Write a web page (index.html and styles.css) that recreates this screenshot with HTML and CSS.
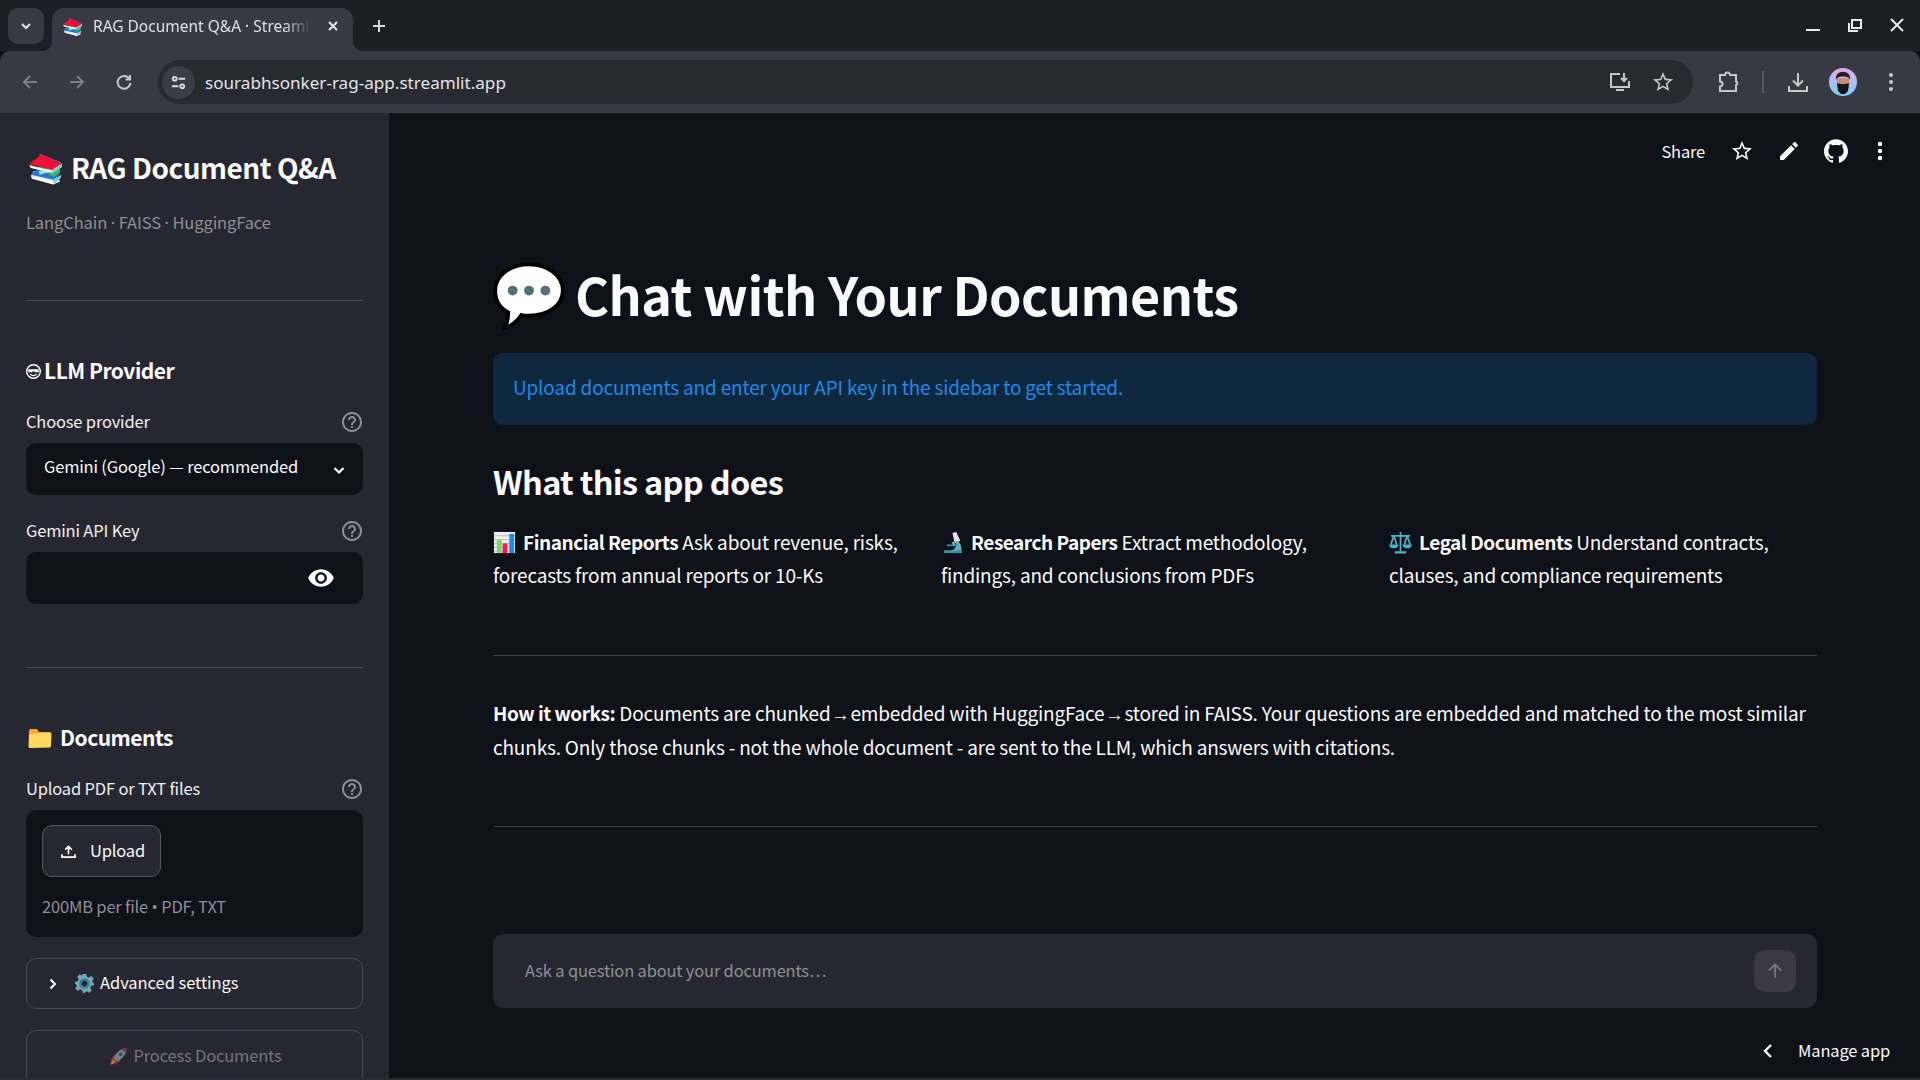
FILE: index.html
```html
<!DOCTYPE html>
<html lang="en">

<head>
	<meta charset="UTF-8">
	<meta name="viewport" content="width=device-width, initial-scale=1.0">
	<title>RAG Document Q&amp;A</title>
	<link rel="stylesheet" href="styles.css">
</head>

<body>
	<svg class="defs" xmlns="http://www.w3.org/2000/svg">
		<symbol id="help" viewBox="0 0 24 24">
			<path fill="currentColor" d="M11 18h2v-2h-2v2zm1-16C6.48 2 2 6.48 2 12s4.48 10 10 10 10-4.48 10-10S17.52 2 12 2zm0 18c-4.41 0-8-3.59-8-8s3.59-8 8-8 8 3.59 8 8-3.59 8-8 8zm0-14c-2.21 0-4 1.79-4 4h2c0-1.1.9-2 2-2s2 .9 2 2c0 2-3 1.75-3 5h2c0-2.25 3-2.5 3-5 0-2.21-1.79-4-4-4z" />
		</symbol>
		<symbol id="books" viewBox="0 0 36 34">
			<path fill="#5f6a6e" d="M12 2l22 9-3 7-20-6z" />
			<path fill="#e8f1f0" d="M3 25l3-5 25 7 2 4-7 3z" />
			<path fill="#1976d2" d="M3 24l8-7 22 7-7 5z" />
			<path fill="#7dc9d6" d="M26 29l8-5v3l-7 6-1-1z" />
			<path fill="#fff" d="M3 25l23 7v2L4 28z" />
			<path fill="#4caf50" d="M9 17l10-5 14 5v5l-7 4z" />
			<path fill="#a5dccb" d="M11 20l20-4-1 3-18 5z" />
			<path fill="#ef0f3a" d="M1 13L14 3l20 9-9 7z" />
			<path fill="#fff" d="M1 14l24 6v2L3 17z" />
			<path fill="#7dc9d6" d="M25 19l10-7v4l-10 7z" />
		</symbol>
	</svg>

	<div class="tabstrip">
		<button class="tab-search">
			<svg viewBox="0 0 16 16"><path d="M4 6l4 4 4-4" /></svg>
		</button>
		<div class="tab">
			<svg class="favicon"><use href="#books" /></svg>
			<span class="tab-title">RAG Document Q&amp;A · Streamlit</span>
			<svg class="tab-close" viewBox="0 0 12 12"><path d="M2 2l8 8M10 2l-8 8" /></svg>
		</div>
		<svg class="new-tab" viewBox="0 0 14 14"><path d="M7 1v12M1 7h12" /></svg>
		<div class="window-controls">
			<svg viewBox="0 0 16 16"><path d="M1 13h14" /></svg>
			<svg viewBox="0 0 16 16"><path d="M5 3h9v8H5zM2 6v8h9" /></svg>
			<svg viewBox="0 0 16 16"><path d="M2 2l12 12M14 2L2 14" /></svg>
		</div>
	</div>

	<div class="toolbar">
		<div class="nav-buttons">
			<svg class="dim" viewBox="0 0 18 18"><path d="M16 9H3M9 3L3 9l6 6" /></svg>
			<svg class="dim" viewBox="0 0 18 18"><path d="M2 9h13M9 3l6 6-6 6" /></svg>
			<svg viewBox="0 0 18 18"><path d="M14.5 6A6.4 6.4 0 1 0 15.4 10M15 2v4.400h-4.400" /></svg>
		</div>
		<div class="omnibox">
			<span class="site-info">
				<svg viewBox="0 0 18 18">
					<circle cx="5" cy="5" r="2" />
					<path d="M9 5h7M2 13h7" />
					<circle cx="13" cy="13" r="2" />
				</svg>
			</span>
			<span class="url">sourabhsonker-rag-app.streamlit.app</span>
			<svg class="omni-icon" viewBox="0 0 22 22">
				<path d="M11 3H2v13h18v-6M15 2v8M12 7l3 3 3-3M7 19h8" />
			</svg>
			<svg class="omni-icon star-icon" viewBox="0 0 24 24">
				<path d="M22 9.240l-7.190-.62L12 2 9.190 8.630 2 9.240l5.460 4.730L5.820 21 12 17.270 18.180 21l-1.630-7.030L22 9.240zM12 15.400l-3.760 2.270 1-4.280-3.320-2.880 4.380-.38L12 6.100l1.710 4.040 4.380.38-3.320 2.880 1 4.280L12 15.400z" />
			</svg>
		</div>
		<div class="toolbar-right">
			<svg class="tool-ext" viewBox="0 0 22 22">
				<path d="M3 4h5a2.500 2.500 0 0 1 5 0h6v6.500a1.800 1.800 0 0 1 0 3.500V20H3v-4.500a2.500 2.500 0 0 0 0-5z" />
			</svg>
			<span class="tool-sep"></span>
			<svg class="tool-dl" viewBox="0 0 22 22"><path d="M11 2v12M6 9.500l5 5 5-5M2 15v5h18v-5" /></svg>
			<svg class="avatar" viewBox="0 0 28 28">
				<defs>
					<linearGradient id="avatarBg" x1="0" y1="0" x2="0" y2="1">
						<stop offset="0" stop-color="#e6a8ec" />
						<stop offset="1" stop-color="#74d2f7" />
					</linearGradient>
				</defs>
				<circle cx="14" cy="14" r="14" />
				<path d="M8 10h12v10H8z" />
				<path d="M7 12C5 1 23 1 21 12l-1-2c-3-2-9-2-12 0z" />
				<path d="M8 15c3 1.500 9 1.500 12 0l-1 8-3 3h-4l-3-3z" />
			</svg>
			<svg class="tool-dots" viewBox="0 0 6 22">
				<circle cx="3" cy="4" r="2" />
				<circle cx="3" cy="11" r="2" />
				<circle cx="3" cy="18" r="2" />
			</svg>
		</div>
	</div>

	<div class="app">
		<aside class="sidebar">
			<div class="brand">
				<svg class="brand-emoji"><use href="#books" /></svg>
				<span>RAG Document Q&amp;A</span>
			</div>
			<p class="caption">LangChain <span class="sym">·</span> FAISS <span class="sym">·</span> HuggingFace</p>
			<hr class="side-rule">

			<h3 class="side-heading tight">
				<svg class="llm-emoji" viewBox="0 0 18 18">
					<circle cx="9" cy="9" r="7.200" fill="none" stroke="#fff" stroke-width="1.500" />
					<path fill="#fff" d="M3.500 6.500h11v3.200h-4l-1-1h-1l-1 1h-4z" />
					<path fill="none" stroke="#fff" stroke-width="1.300" d="M5.500 12c2 1.600 5 1.600 7 0" />
				</svg>
				<span>LLM Provider</span>
			</h3>
			<div class="field-label">
				<span>Choose provider</span>
				<svg class="help"><use href="#help" /></svg>
			</div>
			<div class="select-box">
				<span>Gemini (Google) — recommended</span>
				<svg viewBox="0 0 16 16"><path d="M3.500 6l4.500 4.500L12.500 6" /></svg>
			</div>
			<div class="field-label next">
				<span>Gemini API Key</span>
				<svg class="help"><use href="#help" /></svg>
			</div>
			<div class="key-box">
				<svg viewBox="0 0 24 24">
					<path fill="#fff" d="M12 4.500C7 4.500 2.730 7.610 1 12c1.730 4.390 6 7.500 11 7.500s9.270-3.110 11-7.500c-1.730-4.390-6-7.500-11-7.500zM12 17c-2.760 0-5-2.240-5-5s2.240-5 5-5 5 2.240 5 5-2.240 5-5 5zm0-8c-1.660 0-3 1.340-3 3s1.340 3 3 3 3-1.340 3-3-1.340-3-3-3z" />
				</svg>
			</div>
			<hr class="side-rule second">

			<h3 class="side-heading">
				<svg class="folder-emoji" viewBox="0 0 24 20">
					<path fill="#f5a63c" d="M1 3a2 2 0 0 1 2-2h6l2 3h10a2 2 0 0 1 2 2v2H1z" />
					<path fill="#fdd85d" d="M1 6l21-1.500a1.500 1.500 0 0 1 1.500 1.500L23 18a1.500 1.500 0 0 1-1.500 1.500L2 20a1.500 1.500 0 0 1-1.500-1.500z" />
				</svg>
				<span>Documents</span>
			</h3>
			<div class="field-label">
				<span>Upload PDF or TXT files</span>
				<svg class="help"><use href="#help" /></svg>
			</div>
			<div class="uploader">
				<button class="upload-btn">
					<svg viewBox="0 0 16 16"><path d="M8 11V2.500M4.500 6L8 2.500 11.500 6M1 11v3h14v-3" /></svg>
					<span>Upload</span>
				</button>
				<p class="upload-hint">200MB per file <span class="sym">•</span> PDF, TXT</p>
			</div>
			<div class="expander">
				<svg class="exp-chevron" viewBox="0 0 10 14"><path d="M2.500 2.500L7 7l-4.500 4.500" /></svg>
				<svg class="gear-emoji" viewBox="0 0 24 24">
					<path fill="#6fa9bb" d="M10 1h4l.7 3.200 2.300 1L19.800 3.400l2.800 2.800-1.800 2.800 1 2.300L23 12l-.2 2-3.200.7-1 2.300 1.800 2.800-2.800 2.800-2.800-1.800-2.300 1L12 23l-2-.2-.7-3.200-2.300-1-2.800 1.800-2.800-2.800 1.800-2.800-1-2.300L1 12l.2-2 3.200-.7 1-2.300-1.800-2.800 2.800-2.800L9.200 3.200z" />
					<circle cx="12" cy="12" r="6" fill="#3f7f95" />
					<circle cx="12" cy="12" r="3.200" fill="#262730" />
				</svg>
				<span>Advanced settings</span>
			</div>
			<button class="process-btn">
				<svg class="rocket-emoji" viewBox="0 0 24 24">
					<path fill="#a02433" d="M5 16l-3 1 4-6 4-1zM8 19l-1 3 6-4 1-4z" />
					<path fill="#e0832f" d="M6 15c-2 1-3 5-3 6s5-1 6-3z" />
					<path fill="#7d8b93" d="M6 14C9 7 15 3 22 2c-1 7-5 13-12 16z" />
					<path fill="#a02433" d="M16 3.500C18 3 20 2.500 22 2c-.5 2-1 4-1.500 6z" />
					<circle cx="14.500" cy="9.500" r="2" fill="#3d4d55" />
				</svg>
				<span>Process Documents</span>
			</button>
		</aside>

		<main class="main">
			<div class="app-toolbar">
				<span class="share">Share</span>
				<svg class="bar-icon" viewBox="0 0 24 24">
					<path fill="#fff" d="M22 9.240l-7.190-.62L12 2 9.190 8.630 2 9.240l5.460 4.730L5.820 21 12 17.270 18.180 21l-1.630-7.030L22 9.240zM12 15.400l-3.760 2.270 1-4.280-3.320-2.880 4.380-.38L12 6.100l1.710 4.040 4.380.38-3.320 2.880 1 4.280L12 15.400z" />
				</svg>
				<svg class="bar-icon" viewBox="0 0 24 24">
					<path fill="#fff" d="M3 17.250V21h3.750L17.810 9.940l-3.750-3.750L3 17.250zM20.710 7.040a1 1 0 0 0 0-1.410l-2.340-2.340a1 1 0 0 0-1.410 0l-1.830 1.830 3.750 3.750 1.830-1.830z" />
				</svg>
				<svg class="bar-icon github" viewBox="0 0 24 24">
					<path fill="#fff" d="M12 .297c-6.630 0-12 5.373-12 12 0 5.303 3.438 9.800 8.205 11.385.6.113.82-.258.82-.577 0-.285-.01-1.040-.015-2.040-3.338.724-4.042-1.610-4.042-1.610C4.422 18.070 3.633 17.700 3.633 17.700c-1.087-.744.084-.729.084-.729 1.205.084 1.838 1.236 1.838 1.236 1.070 1.835 2.809 1.305 3.495.998.108-.776.417-1.305.76-1.605-2.665-.3-5.466-1.332-5.466-5.930 0-1.310.465-2.380 1.235-3.220-.135-.303-.54-1.523.105-3.176 0 0 1.005-.322 3.300 1.230.96-.267 1.980-.399 3-.405 1.020.006 2.040.138 3 .405 2.280-1.552 3.285-1.230 3.285-1.230.645 1.653.24 2.873.12 3.176.765.84 1.230 1.910 1.230 3.220 0 4.610-2.805 5.625-5.475 5.920.42.36.81 1.096.81 2.220 0 1.606-.015 2.896-.015 3.286 0 .315.21.69.825.57C20.565 22.092 24 17.592 24 12.297c0-6.627-5.373-12-12-12" />
				</svg>
				<svg class="bar-dots" viewBox="0 0 6 22" fill="#fff">
					<circle cx="3" cy="4" r="2.200" />
					<circle cx="3" cy="11" r="2.200" />
					<circle cx="3" cy="18" r="2.200" />
				</svg>
			</div>

			<div class="content">
				<h1 class="page-title">
					<svg class="bubble-emoji" viewBox="0 0 66 64">
						<path fill="#fff" stroke="#000" stroke-width="3.500" d="M33 3c17 0 31 10 31 24S50 50 33 50c-3 0-5 0-7-.6C23 54 17 60 11 61c2-4 3-9 3-14C6 43 2 36 2 27 2 13 16 3 33 3z" />
						<circle cx="18" cy="27" r="4.500" fill="#546e7a" />
						<circle cx="33" cy="27" r="4.500" fill="#546e7a" />
						<circle cx="48" cy="27" r="4.500" fill="#546e7a" />
					</svg>
					<span>Chat with Your Documents</span>
				</h1>
				<div class="info-box">Upload documents and enter your API key in the sidebar to get started.</div>
				<h2 class="section-title">What this app does</h2>
				<div class="use-cases">
					<p>
						<svg class="inline-emoji" viewBox="0 0 24 24">
							<rect x="1" y="1" width="22" height="22" fill="#eceff1" />
							<path stroke="#b0bec5" stroke-width="1" d="M1 5h22M1 9h22M1 13h22M1 17h22M1 21h22" />
							<rect x="4" y="9" width="5" height="14" fill="#7cd66a" />
							<rect x="10" y="13" width="5" height="10" fill="#ff1744" />
							<rect x="17" y="3" width="5" height="20" fill="#1e88e5" />
						</svg>
						<b>Financial Reports</b> Ask about revenue, risks, forecasts from annual reports or 10-Ks
					</p>
					<p>
						<svg class="inline-emoji" viewBox="0 0 24 24">
							<path fill="#e0e4e6" d="M12 2l4-1 4 9-4 3-2-1z" />
							<path fill="#5fb0c6" d="M15 10c5 1 7 6 6 11H9c3-1 7-3 7-7 0-1-.4-2-1-3z" />
							<path fill="#3f8ea8" d="M3 20h19v3H3zM6 14h10v2H6z" />
							<path fill="#8db4bf" d="M11 12l2-1 2 3-2 1z" />
						</svg>
						<b>Research Papers</b> Extract methodology, findings, and conclusions from PDFs
					</p>
					<p>
						<svg class="inline-emoji" viewBox="0 0 24 24">
							<path fill="none" stroke="#4fb3c8" stroke-width="1.800" d="M12 1v20M2 5h20M5 5l-3 9M5 5l3 9M19 5l-3 9M19 5l3 9" />
							<path fill="#4fb3c8" d="M0 14h10c-.5 3-2.500 4-5 4s-4.500-1-5-4zM14 14h10c-.5 3-2.500 4-5 4s-4.500-1-5-4zM6 21h12v2.500H6z" />
						</svg>
						<b>Legal Documents</b> Understand contracts, clauses, and compliance requirements
					</p>
				</div>
				<hr class="main-rule first">
				<p class="how-it-works"><b>How it works:</b> Documents are chunked <span class="arrow">→</span> embedded with HuggingFace <span class="arrow">→</span> stored in FAISS. Your questions are embedded and matched to the most similar chunks. Only those chunks - not the whole document - are sent to the LLM, which answers with citations.</p>
				<hr class="main-rule">
				<div class="chat-input">
					<span>Ask a question about your documents…</span>
					<button class="send-btn">
						<svg viewBox="0 0 20 20"><path d="M10 17V3.500M4 9.500l6-6 6 6" /></svg>
					</button>
				</div>
			</div>

			<div class="manage-app">
				<svg viewBox="0 0 12 18"><path d="M9 3L3 9l6 6" /></svg>
				<span>Manage app</span>
			</div>
		</main>
	</div>
	<div class="bottom-edge"></div>
</body>

</html>
```

FILE: styles.css
```css
* {
	margin: 0;
	padding: 0;
	box-sizing: border-box;
}

:root {
	--frame: #1c1f26;
	--chrome: #373a42;
	--omni: #272a31;
	--chrome-icon: #c6c7cb;
	--app-bg: #0e1117;
	--side-bg: #262730;
	--rule: #4a4a54;
	--muted: #8e8f96;
	--text: #fafafa;
}

html,
body {
	width: 1920px;
	height: 1080px;
	overflow: hidden;
}

body {
	background: var(--app-bg);
	color: var(--text);
	font-family: "Noto Sans CJK SC", "Noto Sans", sans-serif;
	display: flex;
	flex-direction: column;
}

button {
	font-family: inherit;
	border: none;
	background: none;
	color: inherit;
}

svg {
	flex-shrink: 0;
	display: block;
}

.defs {
	width: 0;
	height: 0;
	position: absolute;
}

.sym {
	font-family: "Noto Sans", sans-serif;
	line-height: 1;
}

.arrow {
	font-family: "Liberation Sans", sans-serif;
	line-height: 1;
	margin: 0 -3.500px;
}

/* browser frame */
.tabstrip {
	height: 51px;
	background: var(--frame);
	display: flex;
	align-items: flex-start;
	padding: 8px 0 0 8px;
}

.tabstrip svg path,
.toolbar svg path,
.toolbar circle {
	fill: none;
	stroke: currentColor;
	stroke-width: 2;
}

.toolbar .avatar path,
.toolbar .avatar circle,
.toolbar .tool-dots circle {
	stroke: none;
}

.toolbar .avatar path:nth-of-type(1) {
	fill: #c98f76;
}

.toolbar .avatar path:nth-of-type(2) {
	fill: #2a1c1c;
}

.toolbar .avatar path:nth-of-type(3) {
	fill: #14161b;
}

.toolbar .avatar circle {
	fill: url(#avatarBg);
}

.toolbar .tool-dots circle {
	fill: currentColor;
}

.toolbar .star-icon path {
	stroke: none;
	fill: currentColor;
}

.tab-search {
	width: 36px;
	height: 36px;
	background: var(--chrome);
	border-radius: 10px;
	display: flex;
	align-items: center;
	justify-content: center;
	color: #e3e4e8;
}

.tab-search svg {
	width: 16px;
	height: 16px;
}

.tab {
	width: 301px;
	height: 43px;
	margin-left: 8px;
	background: var(--chrome);
	border-radius: 12px 12px 0 0;
	display: flex;
	align-items: center;
	padding: 0 14px 7px 10px;
	position: relative;
	color: #dfe0e4;
}

.tab::before,
.tab::after {
	content: "";
	position: absolute;
	bottom: 0;
	width: 10px;
	height: 10px;
}

.tab::before {
	left: -10px;
	background: radial-gradient(circle at 0 0, transparent 10px, var(--chrome) 10.5px);
}

.tab::after {
	right: -10px;
	background: radial-gradient(circle at 100% 0, transparent 10px, var(--chrome) 10.5px);
}

.favicon {
	width: 21px;
	height: 19px;
}

.tab-title {
	margin-left: 10px;
	width: 217px;
	white-space: nowrap;
	overflow: hidden;
	font-family: "Noto Sans", sans-serif;
	font-size: 15.500px;
	-webkit-mask-image: linear-gradient(to right, #000 88%, transparent 100%);
	mask-image: linear-gradient(to right, #000 88%, transparent 100%);
}

.tab-close {
	width: 12px;
	height: 12px;
	margin-left: auto;
	color: #e6e7ea;
}

.new-tab {
	width: 14px;
	height: 14px;
	margin: 11px 0 0 19px;
	color: #d6d7db;
}

.window-controls {
	margin-left: auto;
	display: flex;
	gap: 26px;
	padding: 9px 15px 0 0;
	color: #e8e9ec;
}

.window-controls svg {
	width: 16px;
	height: 16px;
}

.toolbar {
	height: 62px;
	background: var(--chrome);
	display: flex;
	align-items: center;
	border-radius: 10px 10px 0 0;
	padding-left: 21px;
	color: var(--chrome-icon);
}

.nav-buttons {
	display: flex;
	gap: 29px;
	width: 137px;
}

.nav-buttons svg {
	width: 18px;
	height: 18px;
}

.nav-buttons .dim {
	color: #7d7f86;
}

.omnibox {
	width: 1535px;
	height: 44px;
	background: var(--omni);
	border-radius: 22px;
	display: flex;
	align-items: center;
	padding: 0 18px 0 4px;
}

.site-info {
	width: 33px;
	height: 33px;
	border-radius: 50%;
	background: #3a3d45;
	display: flex;
	align-items: center;
	justify-content: center;
	color: #dcdde0;
}

.site-info svg {
	width: 17px;
	height: 17px;
}

.url {
	margin-left: 10px;
	font-family: "Noto Sans", sans-serif;
	font-size: 17.100px;
	color: #e3e4e8;
}

.omni-icon {
	width: 22px;
	height: 22px;
	margin-left: 20px;
}

.omni-icon:first-of-type {
	margin-left: auto;
}

.omni-icon.star-icon {
	width: 24px;
	height: 24px;
}

.toolbar-right {
	display: flex;
	align-items: center;
	flex: 1;
	padding-left: 24px;
}

.tool-ext {
	width: 22px;
	height: 22px;
}

.tool-sep {
	width: 2px;
	height: 22px;
	background: #55575e;
	margin-left: 23px;
}

.tool-dl {
	width: 22px;
	height: 22px;
	margin-left: 23px;
}

.avatar {
	width: 28px;
	height: 28px;
	margin-left: 20px;
}

.tool-dots {
	width: 6px;
	height: 22px;
	margin-left: 31px;
}

/* streamlit app */
.app {
	display: flex;
	height: 965px;
}

.sidebar {
	width: 389px;
	height: 965px;
	background: var(--side-bg);
	padding: 35px 26px 0;
	overflow: hidden;
	font-size: 16.500px;
	letter-spacing: -0.18px;
}

.brand {
	display: flex;
	align-items: center;
	gap: 8px;
	height: 40px;
	padding-left: 2px;
	font-size: 28px;
	font-weight: 600;
	letter-spacing: -0.5px;
}

.brand span {
	padding-bottom: 2px;
}

.brand-emoji {
	width: 35px;
	height: 34px;
}

.caption {
	margin-top: 22px;
	height: 26px;
	line-height: 24px;
	letter-spacing: -0.1px;
	color: var(--muted);
}

.side-rule {
	border: none;
	border-top: 1px solid var(--rule);
	margin-top: 64px;
}

.side-rule.second {
	margin-top: 63px;
}

.side-heading {
	display: flex;
	align-items: center;
	height: 40px;
	margin-top: 50px;
	font-size: 21px;
	font-weight: 600;
	letter-spacing: -0.5px;
	gap: 8px;
	padding-left: 2px;
}

.side-heading span {
	padding-bottom: 2px;
}

.side-heading.tight {
	gap: 2px;
	padding-left: 0;
	margin-left: -1px;
}

.llm-emoji {
	width: 17px;
	height: 17px;
}

.folder-emoji {
	width: 24px;
	height: 20px;
}

.field-label {
	display: flex;
	align-items: center;
	justify-content: space-between;
	height: 26px;
	margin-top: 18px;
	color: #f0f0f2;
}

.field-label span {
	padding-bottom: 2px;
}

.field-label.next {
	margin-top: 23px;
}

.help {
	width: 24px;
	height: 24px;
	margin-right: -1px;
	color: var(--muted);
}

.select-box,
.key-box {
	height: 52px;
	margin-top: 8px;
	background: var(--app-bg);
	border-radius: 10px;
	display: flex;
	align-items: center;
}

.select-box {
	padding: 0 16px 0 18px;
	justify-content: space-between;
}

.select-box span {
	padding-bottom: 6px;
}

.select-box svg {
	width: 16px;
	height: 16px;
	margin-top: 2px;
}

.select-box path {
	fill: none;
	stroke: #fff;
	stroke-width: 2.200;
}

.key-box {
	justify-content: flex-end;
	padding-right: 28px;
}

.key-box svg {
	width: 28px;
	height: 28px;
}

.uploader {
	height: 127px;
	margin-top: 8px;
	background: var(--app-bg);
	border-radius: 10px;
	padding: 15px 16px;
}

.upload-btn {
	width: 119px;
	height: 52px;
	background: var(--side-bg);
	border: 1px solid #55555f;
	border-radius: 10px;
	font-size: 16.500px;
	letter-spacing: -0.18px;
	display: flex;
	align-items: center;
	gap: 14px;
	padding-left: 18px;
}

.upload-btn span {
	padding-bottom: 3px;
}

.upload-btn svg {
	width: 15px;
	height: 15px;
}

.upload-btn path {
	fill: none;
	stroke: #fff;
	stroke-width: 1.800;
}

.upload-hint {
	margin-top: 16px;
	color: var(--muted);
	height: 26px;
	line-height: 26px;
}

.expander {
	height: 51px;
	margin-top: 21px;
	border: 1px solid var(--rule);
	border-radius: 10px;
	display: flex;
	align-items: center;
	padding-left: 21px;
	letter-spacing: -0.05px;
}

.expander span {
	padding-bottom: 3px;
}

.exp-chevron {
	width: 10px;
	height: 14px;
}

.exp-chevron path {
	fill: none;
	stroke: #fff;
	stroke-width: 2;
}

.gear-emoji {
	width: 21px;
	height: 21px;
	margin: 0 5px 0 16px;
}

.process-btn {
	width: 100%;
	height: 60px;
	margin-top: 21px;
	border: 1px solid var(--rule);
	border-radius: 10px;
	font-size: 16.500px;
	letter-spacing: -0.18px;
	color: #75757c;
	display: flex;
	align-items: center;
	justify-content: center;
	gap: 5px;
	padding-bottom: 8px;
}

.process-btn span {
	padding-bottom: 3px;
}

.rocket-emoji {
	width: 21px;
	height: 21px;
	opacity: 0.85;
}

.main {
	flex: 1;
	position: relative;
	display: flex;
	flex-direction: column;
}

.app-toolbar {
	height: 76px;
	display: flex;
	align-items: center;
	justify-content: flex-end;
	padding-right: 37px;
	font-size: 16.500px;
	letter-spacing: -0.18px;
}

.share {
	margin-right: 25px;
}

.bar-icon {
	width: 24px;
	height: 24px;
	margin-right: 23px;
}

.bar-icon.github {
	margin-right: 29px;
}

.bar-dots {
	width: 6px;
	height: 22px;
}

.content {
	padding: 0 103px 0 104px;
}

.page-title {
	display: flex;
	align-items: center;
	gap: 10px;
	height: 76px;
	margin-top: 69px;
	font-size: 52px;
	font-weight: 700;
	letter-spacing: -0.55px;
	padding-bottom: 6px;
}

.bubble-emoji {
	width: 72px;
	height: 70px;
	margin-top: 6px;
}

.info-box {
	height: 72px;
	margin-top: 19px;
	background: #0f283f;
	border-radius: 10px;
	padding: 0 0 5px 20px;
	display: flex;
	align-items: center;
	color: #2089e8;
	font-size: 19px;
	letter-spacing: -0.18px;
}

.section-title {
	height: 48px;
	line-height: 44px;
	margin-top: 34px;
	font-size: 32.500px;
	font-weight: 600;
	letter-spacing: -0.7px;
}

.use-cases {
	display: grid;
	grid-template-columns: repeat(3, 1fr);
	column-gap: 20px;
	margin-top: 18px;
	font-size: 19px;
	letter-spacing: -0.18px;
	line-height: 33px;
}

.use-cases b,
.how-it-works b {
	font-weight: 600;
	letter-spacing: -0.48px;
}

.inline-emoji {
	display: inline-block;
	width: 23px;
	height: 23px;
	vertical-align: 2px;
	margin: -6px 3px -6px 0;
}

.main-rule {
	border: none;
	border-top: 1px solid #3c3d44;
	margin-top: 63px;
}

.main-rule.first {
	margin-top: 64px;
}

.how-it-works {
	margin-top: 40px;
	font-size: 19px;
	letter-spacing: -0.18px;
	line-height: 33.600px;
}

.chat-input {
	height: 74px;
	margin-top: 107px;
	background: var(--side-bg);
	border-radius: 10px;
	display: flex;
	align-items: center;
	justify-content: space-between;
	padding: 0 21px 0 32px;
	color: var(--muted);
	font-size: 16.500px;
	letter-spacing: -0.18px;
}

.chat-input > span {
	padding-bottom: 2px;
}

.send-btn {
	width: 42px;
	height: 42px;
	background: #3a3944;
	border-radius: 10px;
	display: flex;
	align-items: center;
	justify-content: center;
}

.send-btn svg {
	width: 20px;
	height: 20px;
}

.send-btn path {
	fill: none;
	stroke: #77767f;
	stroke-width: 1.800;
}

.manage-app {
	margin-top: auto;
	height: 54px;
	display: flex;
	align-items: center;
	justify-content: flex-end;
	padding-right: 30px;
	gap: 24px;
	font-size: 16.500px;
	letter-spacing: -0.18px;
}

.manage-app span {
	padding-bottom: 2px;
}

.manage-app svg {
	width: 12px;
	height: 18px;
}

.manage-app path {
	fill: none;
	stroke: #fff;
	stroke-width: 2.400;
}

.bottom-edge {
	height: 2px;
	background: #2a2b30;
}
```
